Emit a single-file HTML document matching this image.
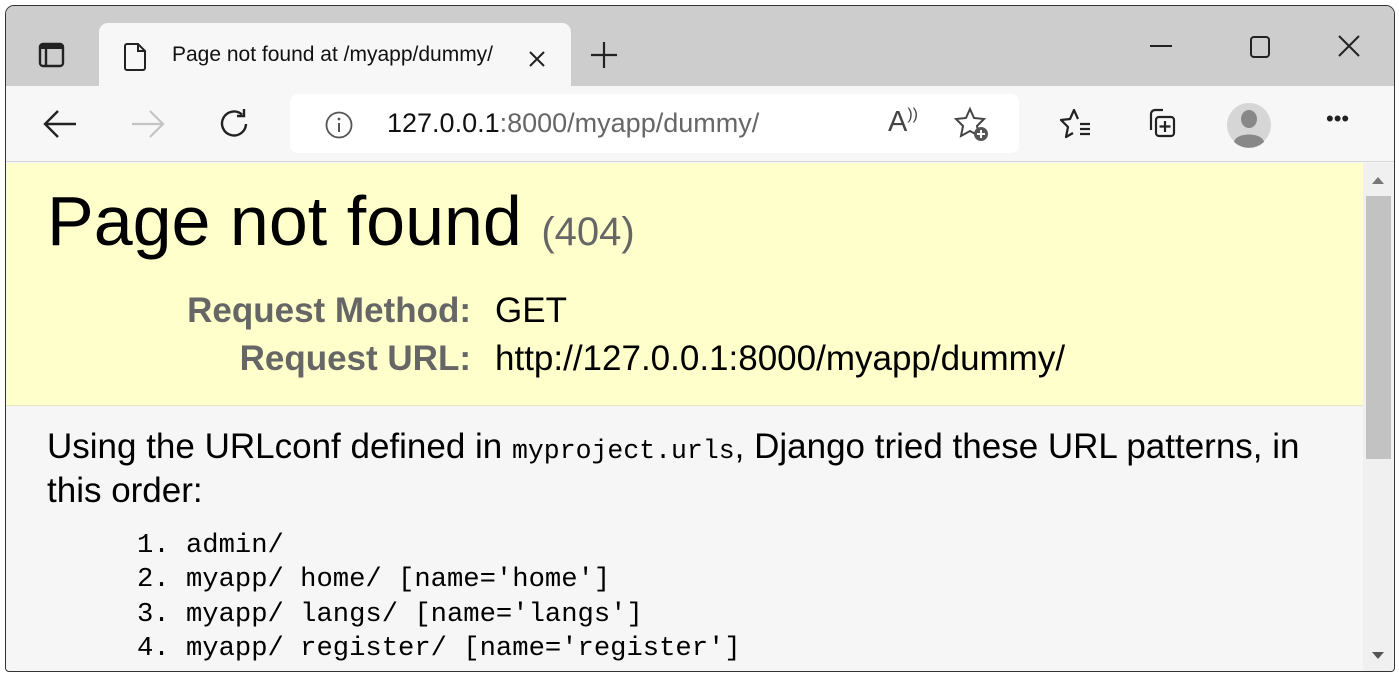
<!DOCTYPE html>
<html><head><meta charset="utf-8"><style>
*{margin:0;padding:0;box-sizing:border-box}
body{width:1399px;height:676px;overflow:hidden;background:#fff;font-family:"Liberation Sans",Arial,sans-serif;position:relative}
.win{position:absolute;left:5px;top:5px;width:1390px;height:667px;border:1.5px solid #333;border-radius:9px 9px 4px 4px;overflow:hidden;background:#f6f6f6}
.tabbar{position:absolute;left:0;top:0;width:100%;height:80px;background:#cdcdcd}
.tab{position:absolute;left:93px;top:17px;width:472px;height:66px;background:#f7f7f7;border-radius:9px 9px 0 0}
.toolbar{position:absolute;left:0;top:80px;width:100%;height:76px;background:#f7f7f7;border-bottom:1.5px solid #d6d6d6}
.addr{position:absolute;left:284px;top:8px;width:729px;height:59px;background:#fff;border-radius:8px}
.abs{position:absolute}
.page{position:absolute;left:0;top:157px;width:1357px;height:510px}
.yellow{position:absolute;left:0;top:0;width:100%;height:243px;background:#ffffcc;border-bottom:1px solid #e6e6c0}
.sb{position:absolute;left:1357px;top:157px;width:30px;height:510px;background:#f0f0f0}
.mono{font-family:"Liberation Mono",monospace}
</style></head><body>
<div class="win">
 <div class="tabbar">
  <svg class="abs" style="left:31px;top:34px" width="30" height="30" viewBox="0 0 30 30"><rect x="3" y="4" width="23" height="22" rx="3" fill="none" stroke="#222" stroke-width="2.4"/><rect x="3" y="4" width="23" height="5" fill="#222"/><line x1="9" y1="9" x2="9" y2="26" stroke="#222" stroke-width="2.4"/></svg>
  <div class="tab">
   <svg class="abs" style="left:24px;top:18px" width="26" height="32" viewBox="0 0 26 32"><path d="M4 3h11l7 7v17a2 2 0 0 1-2 2H4a2 2 0 0 1-2-2V5a2 2 0 0 1 2-2z M15 3v7h7" fill="none" stroke="#222" stroke-width="2"/></svg>
   <div class="abs" style="left:73px;top:20px;font-size:21px;color:#111;white-space:nowrap;width:332px;overflow:hidden;letter-spacing:0px">Page not found at /myapp/dummy/</div>
   <svg class="abs" style="left:428px;top:26px" width="20" height="20" viewBox="0 0 20 20"><path d="M3 3L17 17M17 3L3 17" stroke="#222" stroke-width="2"/></svg>
  </div>
  <svg class="abs" style="left:583px;top:34px" width="30" height="30" viewBox="0 0 30 30"><path d="M15 2V28M2 15H28" stroke="#222" stroke-width="2.2"/></svg>
  <svg class="abs" style="left:1140px;top:30px" width="30" height="20"><path d="M4 10H26" stroke="#222" stroke-width="2"/></svg>
  <svg class="abs" style="left:1240px;top:28px" width="30" height="26"><rect x="5" y="3" width="18" height="20" rx="3" fill="none" stroke="#222" stroke-width="2"/></svg>
  <svg class="abs" style="left:1330px;top:27px" width="26" height="26"><path d="M3 3L23 23M23 3L3 23" stroke="#222" stroke-width="2"/></svg>
 </div>
 <div class="toolbar">
  <svg class="abs" style="left:36px;top:22px" width="36" height="32" viewBox="0 0 36 32"><path d="M34 16H4M16 3L3 16L16 29" fill="none" stroke="#222" stroke-width="2.4"/></svg>
  <svg class="abs" style="left:124px;top:22px" width="36" height="32" viewBox="0 0 36 32"><path d="M2 16H32M20 3L33 16L20 29" fill="none" stroke="#c4c4c4" stroke-width="2.2"/></svg>
  <svg class="abs" style="left:211px;top:20px" width="36" height="36" viewBox="0 0 36 36"><path d="M29 18A12 12 0 1 1 25 8.5M27 3V10H20" fill="none" stroke="#222" stroke-width="2.4"/></svg>
  <div class="addr">
   <svg class="abs" style="left:34px;top:16px" width="30" height="30" viewBox="0 0 30 30"><circle cx="15" cy="15" r="12.5" fill="none" stroke="#555" stroke-width="1.8"/><path d="M15 13V22" stroke="#555" stroke-width="2"/><circle cx="15" cy="9" r="1.4" fill="#555"/></svg>
   <div class="abs" style="left:97px;top:14px;font-size:27px;color:#111;white-space:nowrap">127.0.0.1<span style="color:#666">:8000/myapp/dummy/</span></div>
   <div class="abs" style="left:598px;top:12px;font-size:29px;color:#444">A<span style="font-size:16px;vertical-align:top">))</span></div>
   <svg class="abs" style="left:664px;top:12px" width="40" height="40" viewBox="0 0 40 40"><path d="M16 3L20 12L30 13L23 20L25 30L16 25L7 30L9 20L2 13L12 12Z" fill="none" stroke="#444" stroke-width="2"/><circle cx="27" cy="28" r="7" fill="#555"/><path d="M27 24V32M23 28H31" stroke="#fff" stroke-width="2"/></svg>
  </div>
  <svg class="abs" style="left:1052px;top:20px" width="40" height="36" viewBox="0 0 40 36"><path d="M20 13L16 4L12 13L3 14L10 21L8 31L15 27" fill="none" stroke="#222" stroke-width="2.2" stroke-linejoin="round"/><path d="M22 18H32M22 23H32M22 28H32" stroke="#222" stroke-width="2.2"/></svg>
  <svg class="abs" style="left:1135px;top:18px" width="40" height="40" viewBox="0 0 40 40"><path d="M10 26V10A4 4 0 0 1 14 6H22" fill="none" stroke="#222" stroke-width="2.2"/><rect x="15" y="13" width="18" height="19" rx="3" fill="none" stroke="#222" stroke-width="2.2"/><path d="M24 17V28M18.5 22.5H29.5" stroke="#222" stroke-width="2.2"/></svg>
  <svg class="abs" style="left:1220px;top:16px" width="46" height="46" viewBox="0 0 46 46"><ellipse cx="23" cy="23" rx="22" ry="22" fill="#d6d6d6"/><ellipse cx="23" cy="17" rx="8" ry="9" fill="#888"/><path d="M8 40C10 30 36 30 38 40A22 22 0 0 1 8 40Z" fill="#888"/></svg>
  <div class="abs" style="left:1320px;top:20px;font-size:22px;color:#222;letter-spacing:0px">•••</div>
 </div>
 <div class="page">
  <div class="yellow">
   <div class="abs" style="left:41px;top:18px;font-size:70px;color:#000;white-space:nowrap">Page not found <span style="font-size:40px;color:#666">(404)</span></div>
   <div class="abs" style="left:0;width:465px;text-align:right;top:128px;font-size:35px;font-weight:bold;color:#666">Request Method:</div>
   <div class="abs" style="left:489px;top:128px;font-size:35px;color:#000">GET</div>
   <div class="abs" style="left:0;width:465px;text-align:right;top:176px;font-size:35px;font-weight:bold;color:#666">Request URL:</div>
   <div class="abs" style="left:489px;top:176px;font-size:35px;color:#000">http://127.0.0.1:8000/myapp/dummy/</div>
  </div>
  <div class="abs" style="left:41px;top:264px;width:1310px;font-size:35px;line-height:40px;color:#000;white-space:nowrap">Using the URLconf defined in <span class="mono" style="font-size:26.5px">myproject.urls</span>, Django tried these URL patterns, in<br>this order:</div>
  <div class="abs mono" style="left:131px;top:366px;font-size:27.2px;line-height:34.3px;color:#000;white-space:pre">1. admin/
2. myapp/ home/ [name='home']
3. myapp/ langs/ [name='langs']
4. myapp/ register/ [name='register']</div>
 </div>
 <div class="sb">
  <div class="abs" style="left:3px;top:33px;width:25px;height:263px;background:#c2c2c2"></div>
  <svg class="abs" style="left:8px;top:12px" width="14" height="10"><path d="M1 9L7 2L13 9Z" fill="#777"/></svg>
  <svg class="abs" style="left:8px;top:488px" width="14" height="10"><path d="M1 1L7 8L13 1Z" fill="#555"/></svg>
 </div>
</div>
</body></html>
